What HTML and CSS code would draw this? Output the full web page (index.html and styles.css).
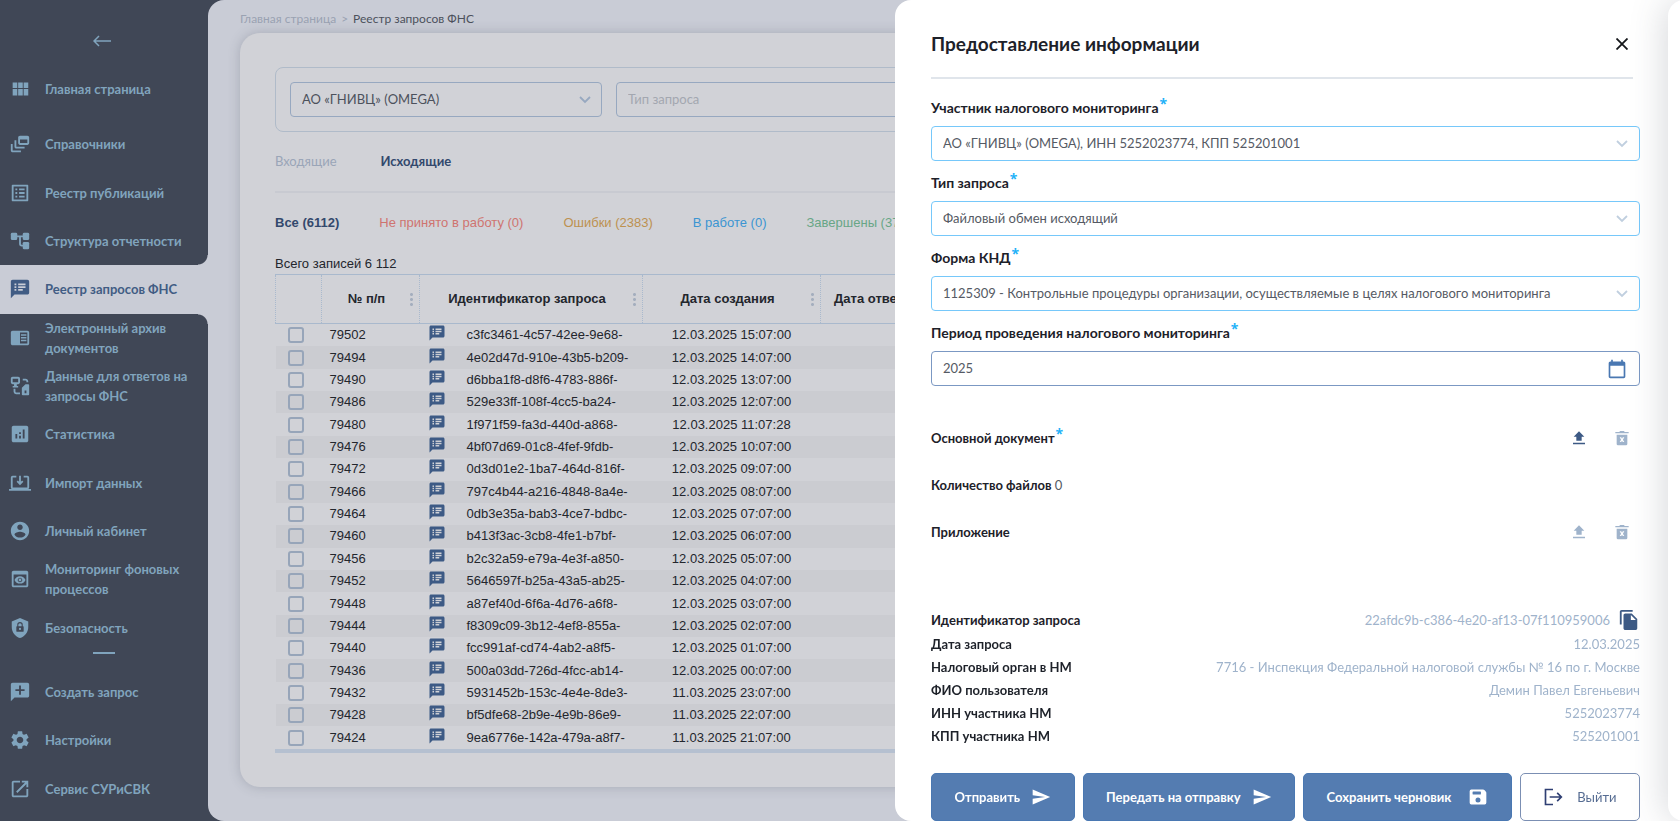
FILE: index.html
```html
<!DOCTYPE html>
<html lang="ru">

<head>
    <meta charset="UTF-8">
    <meta name="viewport" content="width=device-width, initial-scale=1.0">
    <title>Реестр запросов ФНС</title>
    <link rel="stylesheet" href="styles.css">
</head>

<body>
    <!-- Icons -->
    <svg class="sprite" aria-hidden="true">
        <symbol id="i-back" viewBox="0 0 18 12"><path d="M6 1 1 6l5 5M1.5 6H18" fill="none" stroke="currentColor" stroke-width="1.5" /></symbol>
        <symbol id="i-grid" viewBox="0 0 24 24"><path d="M4 11h5V5H4zm0 8h5v-7H4zm6 0h5v-7h-5zm6 0h5v-7h-5zm-6-8h5V5h-5zm6-6v6h5V5z" /></symbol>
        <symbol id="i-feed" viewBox="0 0 24 24"><path d="M8 8H6v7c0 1.1.9 2 2 2h9v-2H8zM20 3h-8c-1.1 0-2 .9-2 2v6c0 1.1.9 2 2 2h8c1.1 0 2-.9 2-2V5c0-1.1-.9-2-2-2zm0 8h-8V7h8zM4 12H2v7c0 1.1.9 2 2 2h9v-2H4z" /></symbol>
        <symbol id="i-list" viewBox="0 0 24 24"><path d="M19 5v14H5V5h14m1.1-2H3.9c-.5 0-.9.4-.9.9v16.2c0 .4.4.9.9.9h16.2c.4 0 .9-.5.9-.9V3.9c0-.5-.5-.9-.9-.9zM11 7h6v2h-6zm0 4h6v2h-6zm0 4h6v2h-6zM7 7h2v2H7zm0 4h2v2H7zm0 4h2v2H7z" /></symbol>
        <symbol id="i-tree" viewBox="0 0 24 24"><rect x="2" y="3" width="7" height="8" rx="1.5" /><rect x="15" y="3" width="7" height="8" rx="1.5" /><rect x="15" y="13" width="7" height="8" rx="1.5" /><path d="M8 7h8M12 7v8q0 2 2 2h2" fill="none" stroke="currentColor" stroke-width="2" /></symbol>
        <symbol id="i-notes" viewBox="0 0 24 24"><path d="M20 2H4c-1.1 0-2 .9-2 2v18l4-4h14c1.1 0 2-.9 2-2V4c0-1.1-.9-2-2-2zM8 14H6v-2h2zm0-3H6V9h2zm0-3H6V6h2zm7 6h-5v-2h5zm3-3h-8V9h8zm0-3h-8V6h8z" /></symbol>
        <symbol id="i-archive" viewBox="0 0 24 24"><path d="M20 4H4c-1.1 0-2 .9-2 2v12c0 1.1.9 2 2 2h16c1.1 0 2-.9 2-2V6c0-1.1-.9-2-2-2zm0 14h-8V6h8zM13 8h6v1.6h-6zm0 3h6v1.6h-6zm0 3h6v1.6h-6z" /></symbol>
        <symbol id="i-data" viewBox="0 0 24 24"><path fill-rule="evenodd" d="M4 2h6c1.1 0 2 .9 2 2v4c0 1.1-.9 2-2 2H8.500v2H10v1.500H4V12h1.500v-2H4c-1.100 0-2-.9-2-2V4c0-1.100.9-2 2-2zm0 2v4h6V4zM15 4h3c1.700 0 3 1.300 3 3v1h-2V7c0-.6-.4-1-1-1h-3zM5 15h2v3c0 .6.4 1 1 1h4v2H8c-1.700 0-3-1.300-3-3zM18 10h3q1 0 1 1v10q0 1-1 1h-6q-1 0-1-1v-7zM17 17v3h2v-3z" /></symbol>
        <symbol id="i-stats" viewBox="0 0 24 24"><path d="M19 3H5c-1.1 0-2 .9-2 2v14c0 1.1.9 2 2 2h14c1.1 0 2-.9 2-2V5c0-1.1-.9-2-2-2zM9 17H7v-5h2zm4 0h-2v-3h2zm0-5h-2v-2h2zm4 5h-2V7h2z" /></symbol>
        <symbol id="i-import" viewBox="0 0 24 24"><path d="M8 5H4q-1 0-1 1v11q0 1 1 1h16q1 0 1-1V6q0-1-1-1h-4M12 4v8M9 10l3 3 3-3M0 19.5h24" fill="none" stroke="currentColor" stroke-width="2" /></symbol>
        <symbol id="i-user" viewBox="0 0 24 24"><path d="M12 2C6.48 2 2 6.48 2 12s4.48 10 10 10 10-4.48 10-10S17.52 2 12 2zm0 3c1.66 0 3 1.34 3 3s-1.34 3-3 3-3-1.34-3-3 1.34-3 3-3zm0 14.2c-2.5 0-4.71-1.28-6-3.22.03-1.99 4-3.08 6-3.08 1.99 0 5.97 1.09 6 3.08-1.29 1.94-3.5 3.22-6 3.22z" /></symbol>
        <symbol id="i-monitor" viewBox="0 0 24 24"><path d="M19 3H5c-1.11 0-2 .9-2 2v14c0 1.1.89 2 2 2h14c1.1 0 2-.9 2-2V5c0-1.1-.9-2-2-2zm0 16H5V7h14zm-5.5-6c0 .83-.67 1.5-1.5 1.5s-1.5-.67-1.5-1.5.67-1.5 1.5-1.5 1.5.67 1.5 1.5zM12 9c-2.73 0-5.06 1.66-6 4 .94 2.34 3.27 4 6 4s5.06-1.66 6-4c-.94-2.34-3.27-4-6-4zm0 6.5c-1.38 0-2.5-1.12-2.5-2.5s1.12-2.5 2.5-2.5 2.5 1.12 2.5 2.5-1.12 2.5-2.5 2.5z" /></symbol>
        <symbol id="i-shield" viewBox="0 0 24 24"><path fill-rule="evenodd" d="M12 1 3 5v6c0 5.550 3.840 10.740 9 12 5.160-1.260 9-6.450 9-12V5zM8.500 10H9V8.500a3 3 0 0 1 6 0V10h.5q.5 0 .5.5v5q0 .5-.5.5h-7q-.5 0-.5-.5v-5q0-.5.5-.5zm1.700 0h3.600V8.500a1.800 1.800 0 0 0-3.600 0zM12 11.800a1.200 1.200 0 1 0 0 2.400 1.200 1.200 0 0 0 0-2.400z" /></symbol>
        <symbol id="i-create" viewBox="0 0 24 24"><path d="M20 2H4c-1.1 0-2 .9-2 2v18l4-4h14c1.1 0 2-.9 2-2V4c0-1.1-.9-2-2-2zm-3 9h-4v4h-2v-4H7V9h4V5h2v4h4z" /></symbol>
        <symbol id="i-settings" viewBox="0 0 24 24"><path d="M19.14 12.94c.04-.3.06-.61.06-.94 0-.32-.02-.64-.07-.94l2.03-1.58c.18-.14.23-.41.12-.61l-1.92-3.32c-.12-.22-.37-.29-.59-.22l-2.39.96c-.5-.38-1.03-.7-1.62-.94l-.36-2.54c-.04-.24-.24-.41-.48-.41h-3.84c-.24 0-.43.17-.47.41l-.36 2.54c-.59.24-1.13.57-1.62.94l-2.39-.96c-.22-.08-.47 0-.59.22L2.74 8.87c-.12.21-.08.47.12.61l2.03 1.58c-.05.3-.09.63-.09.94s.02.64.07.94l-2.03 1.58c-.18.14-.23.41-.12.61l1.92 3.32c.12.22.37.29.59.22l2.39-.96c.5.38 1.03.7 1.62.94l.36 2.54c.05.24.24.41.48.41h3.84c.24 0 .44-.17.47-.41l.36-2.54c.59-.24 1.13-.56 1.62-.94l2.39.96c.22.08.47 0 .59-.22l1.92-3.32c.12-.22.07-.47-.12-.61zM12 15.6c-1.98 0-3.6-1.62-3.6-3.6s1.62-3.6 3.6-3.6 3.6 1.62 3.6 3.6-1.62 3.6-3.6 3.6z" /></symbol>
        <symbol id="i-open" viewBox="0 0 24 24"><path d="M19 19H5V5h7V3H5c-1.11 0-2 .9-2 2v14c0 1.1.89 2 2 2h14c1.1 0 2-.9 2-2v-7h-2zM14 3v2h3.59l-9.83 9.83 1.41 1.41L19 6.41V10h2V3z" /></symbol>
        <symbol id="i-chevron" viewBox="0 0 12 12"><path d="M1 3l5 5 5-5" fill="none" stroke="currentColor" stroke-width="1.8" /></symbol>
        <symbol id="i-close" viewBox="0 0 12 12"><path d="M.5.5l11 11M11.5.5l-11 11" fill="none" stroke="currentColor" stroke-width="1.8" /></symbol>
        <symbol id="i-calendar" viewBox="0 0 24 24"><path d="M20 3h-1V1h-2v2H7V1H5v2H4c-1.1 0-2 .9-2 2v16c0 1.1.9 2 2 2h16c1.1 0 2-.9 2-2V5c0-1.1-.9-2-2-2zm0 18H4V8h16z" /></symbol>
        <symbol id="i-upload" viewBox="0 0 24 24"><path d="M8 16h8v-6h4l-8-8-8 8h4zM3 19h18v2.5H3z" /></symbol>
        <symbol id="i-trash" viewBox="0 0 24 24"><path fill-rule="evenodd" d="M4 7h16v14q0 2-2 2H6q-2 0-2-2zM8.500 11l2.200 3.500-2.200 3.500h2.300l1.200-2 1.200 2h2.300l-2.200-3.500 2.200-3.500h-2.300l-1.200 2-1.200-2zM2 3h6l1-1.500h6L16 3h6v2H2z" /></symbol>
        <symbol id="i-copy" viewBox="0 0 24 24"><path d="M16 1H4c-1.1 0-2 .9-2 2v14h2V3h12zM15 5H8c-1.1 0-2 .9-2 2v14c0 1.1.9 2 2 2h11c1.1 0 2-.9 2-2V11zm-1 7V6.5l5.5 5.5z" /></symbol>
        <symbol id="i-send" viewBox="0 0 24 24"><path d="M2 21 23 12 2 3v7l15 2-15 2z" /></symbol>
        <symbol id="i-save" viewBox="0 0 24 24"><path fill-rule="evenodd" d="M18 3H4q-2 0-2 2v14q0 2 2 2h16q2 0 2-2V7q0-1-1-2l-1-1q-1-1-2-1zM6 5.5h9q.5 0 .5.5v2.500q0 .5-.5.5H6q-.5 0-.5-.5V6q0-.5.5-.5zM12 12.500a3 3 0 1 0 0 6 3 3 0 0 0 0-6z" /></symbol>
        <symbol id="i-exit" viewBox="0 0 24 24"><path d="M12 3H3v18h9M8 12h14M17 7l5 5-5 5" fill="none" stroke="currentColor" stroke-width="2" /></symbol>
    </svg>

    <div class="layout">
        <!-- Sidebar -->
        <aside class="sidebar">
            <button class="back" type="button" aria-label="Свернуть меню"><svg><use href="#i-back" /></svg></button>
            <nav class="menu">
                <a class="menu-item menu-home" href="#"><svg><use href="#i-grid" /></svg>Главная страница</a>
                <a class="menu-item" href="#"><svg><use href="#i-feed" /></svg>Справочники</a>
                <a class="menu-item" href="#"><svg><use href="#i-list" /></svg>Реестр публикаций</a>
                <a class="menu-item" href="#"><svg><use href="#i-tree" /></svg>Структура отчетности</a>
                <a class="menu-item active" href="#"><svg><use href="#i-notes" /></svg>Реестр запросов ФНС</a>
                <a class="menu-item" href="#"><svg><use href="#i-archive" /></svg>Электронный архив документов</a>
                <a class="menu-item" href="#"><svg><use href="#i-data" /></svg>Данные для ответов на запросы ФНС</a>
                <a class="menu-item" href="#"><svg><use href="#i-stats" /></svg>Статистика</a>
                <a class="menu-item" href="#"><svg><use href="#i-import" /></svg>Импорт данных</a>
                <a class="menu-item" href="#"><svg><use href="#i-user" /></svg>Личный кабинет</a>
                <a class="menu-item" href="#"><svg><use href="#i-monitor" /></svg>Мониторинг фоновых процессов</a>
                <a class="menu-item" href="#"><svg><use href="#i-shield" /></svg>Безопасность</a>
                <hr class="menu-line">
                <a class="menu-item" href="#"><svg><use href="#i-create" /></svg>Создать запрос</a>
                <a class="menu-item" href="#"><svg><use href="#i-settings" /></svg>Настройки</a>
                <a class="menu-item" href="#"><svg><use href="#i-open" /></svg>Сервис СУРиСВК</a>
            </nav>
        </aside>

        <!-- Registry -->
        <main class="content">
            <div class="breadcrumbs">
                <a href="#">Главная страница</a>
                <span>&gt;</span>
                <span class="current">Реестр запросов ФНС</span>
            </div>
            <section class="card">
                <div class="filters">
                    <div class="select">
                        <select aria-label="Участник">
                            <option>АО «ГНИВЦ» (OMEGA)</option>
                        </select>
                        <svg><use href="#i-chevron" /></svg>
                    </div>
                    <div class="select empty">
                        <select aria-label="Тип запроса">
                            <option>Тип запроса</option>
                        </select>
                        <svg><use href="#i-chevron" /></svg>
                    </div>
                </div>
                <div class="tabs">
                    <a href="#">Входящие</a>
                    <a class="selected" href="#">Исходящие</a>
                </div>
                <div class="statuses">
                    <a class="all" href="#">Все (6112)</a>
                    <a class="rejected" href="#">Не принято в работу (0)</a>
                    <a class="errors" href="#">Ошибки (2383)</a>
                    <a class="working" href="#">В работе (0)</a>
                    <a class="done" href="#">Завершены (3729)</a>
                </div>
                <p class="total">Всего записей 6 112</p>
                <div class="table-box">
                    <table>
                        <colgroup>
                            <col class="col-check">
                            <col class="col-number">
                            <col class="col-id">
                            <col class="col-date">
                            <col class="col-date">
                            <col>
                        </colgroup>
                        <thead>
                            <tr>
                                <th></th>
                                <th><div class="head"><span>№ п/п</span><i class="dots"></i></div></th>
                                <th><div class="head"><span>Идентификатор запроса</span><i class="dots"></i></div></th>
                                <th><div class="head"><span>Дата создания</span><i class="dots"></i></div></th>
                                <th><div class="head"><span>Дата ответа на запрос</span><i class="dots"></i></div></th>
                                <th></th>
                            </tr>
                        </thead>
                        <tbody id="rows"></tbody>
                    </table>
                </div>
            </section>
        </main>
    </div>

    <!-- Request form -->
    <form class="drawer">
        <header class="drawer-head">
            <h1>Предоставление информации</h1>
            <button class="icon-button close" type="button" aria-label="Закрыть"><svg><use href="#i-close" /></svg></button>
        </header>

        <div class="field">
            <label for="member">Участник налогового мониторинга<sup>*</sup></label>
            <div class="select">
                <select id="member">
                    <option>АО «ГНИВЦ» (OMEGA), ИНН 5252023774, КПП 525201001</option>
                </select>
                <svg><use href="#i-chevron" /></svg>
            </div>
        </div>
        <div class="field">
            <label for="type">Тип запроса<sup>*</sup></label>
            <div class="select">
                <select id="type">
                    <option>Файловый обмен исходящий</option>
                </select>
                <svg><use href="#i-chevron" /></svg>
            </div>
        </div>
        <div class="field">
            <label for="knd">Форма КНД<sup>*</sup></label>
            <div class="select">
                <select id="knd">
                    <option>1125309 - Контрольные процедуры организации, осуществляемые в целях налогового мониторинга</option>
                </select>
                <svg><use href="#i-chevron" /></svg>
            </div>
        </div>
        <div class="field">
            <label for="period">Период проведения налогового мониторинга<sup>*</sup></label>
            <div class="period">
                <input id="period" type="text" value="2025">
                <button class="icon-button calendar" type="button" aria-label="Выбрать период"><svg><use href="#i-calendar" /></svg></button>
            </div>
        </div>

        <div class="files">
            <div class="file-row">
                <b>Основной документ<sup>*</sup></b>
                <button class="icon-button" type="button" aria-label="Загрузить документ"><svg><use href="#i-upload" /></svg></button>
                <button class="icon-button" type="button" aria-label="Удалить документ" disabled><svg><use href="#i-trash" /></svg></button>
            </div>
            <p class="count"><b>Количество файлов</b> 0</p>
            <div class="file-row">
                <b>Приложение</b>
                <button class="icon-button" type="button" aria-label="Загрузить приложение" disabled><svg><use href="#i-upload" /></svg></button>
                <button class="icon-button" type="button" aria-label="Удалить приложение" disabled><svg><use href="#i-trash" /></svg></button>
            </div>
        </div>

        <dl class="info">
            <dt>Идентификатор запроса</dt>
            <dd class="guid">22afdc9b-c386-4e20-af13-07f110959006
                <button class="icon-button copy" type="button" aria-label="Скопировать"><svg><use href="#i-copy" /></svg></button>
            </dd>
            <dt>Дата запроса</dt>
            <dd>12.03.2025</dd>
            <dt>Налоговый орган в НМ</dt>
            <dd>7716 - Инспекция Федеральной налоговой службы № 16 по г. Москве</dd>
            <dt>ФИО пользователя</dt>
            <dd>Демин Павел Евгеньевич</dd>
            <dt>ИНН участника НМ</dt>
            <dd>5252023774</dd>
            <dt>КПП участника НМ</dt>
            <dd>525201001</dd>
        </dl>

        <footer class="actions">
            <button class="button" type="button">Отправить<svg><use href="#i-send" /></svg></button>
            <button class="button" type="button">Передать на отправку<svg><use href="#i-send" /></svg></button>
            <button class="button save" type="button">Сохранить черновик<svg><use href="#i-save" /></svg></button>
            <button class="button exit" type="button"><svg><use href="#i-exit" /></svg>Выйти</button>
        </footer>
        <div class="next-panel"></div>
    </form>

    <script>
        const rows = [
            [79502, "c3fc3461-4c57-42ee-9e68-", "12.03.2025 15:07:00"],
            [79494, "4e02d47d-910e-43b5-b209-", "12.03.2025 14:07:00"],
            [79490, "d6bba1f8-d8f6-4783-886f-", "12.03.2025 13:07:00"],
            [79486, "529e33ff-108f-4cc5-ba24-", "12.03.2025 12:07:00"],
            [79480, "1f971f59-fa3d-440d-a868-", "12.03.2025 11:07:28"],
            [79476, "4bf07d69-01c8-4fef-9fdb-", "12.03.2025 10:07:00"],
            [79472, "0d3d01e2-1ba7-464d-816f-", "12.03.2025 09:07:00"],
            [79466, "797c4b44-a216-4848-8a4e-", "12.03.2025 08:07:00"],
            [79464, "0db3e35a-bab3-4ce7-bdbc-", "12.03.2025 07:07:00"],
            [79460, "b413f3ac-3cb8-4fe1-b7bf-", "12.03.2025 06:07:00"],
            [79456, "b2c32a59-e79a-4e3f-a850-", "12.03.2025 05:07:00"],
            [79452, "5646597f-b25a-43a5-ab25-", "12.03.2025 04:07:00"],
            [79448, "a87ef40d-6f6a-4d76-a6f8-", "12.03.2025 03:07:00"],
            [79444, "f8309c09-3b12-4ef8-855a-", "12.03.2025 02:07:00"],
            [79440, "fcc991af-cd74-4ab2-a8f5-", "12.03.2025 01:07:00"],
            [79436, "500a03dd-726d-4fcc-ab14-", "12.03.2025 00:07:00"],
            [79432, "5931452b-153c-4e4e-8de3-", "11.03.2025 23:07:00"],
            [79428, "bf5dfe68-2b9e-4e9b-86e9-", "11.03.2025 22:07:00"],
            [79424, "9ea6776e-142a-479a-a8f7-", "11.03.2025 21:07:00"]
        ];

        document.getElementById("rows").innerHTML = rows.map(([number, id, date]) => `
            <tr>
                <td class="check"><input type="checkbox" aria-label="Выбрать ${number}"></td>
                <td class="number">${number}</td>
                <td><div class="id"><svg><use href="#i-notes" /></svg>${id}</div></td>
                <td class="date">${date}</td>
                <td></td>
                <td></td>
            </tr>`).join("");
    </script>
</body>

</html>
```
FILE: styles.css
```css
* {
    box-sizing: border-box;
}

body {
    margin: 0;
    overflow: hidden;
    background-color: #404756;
    font-family: Lato, "Open Sans", sans-serif;
    font-size: 13px;
    line-height: 20px;
}

a {
    color: inherit;
    text-decoration: none;
}

button,
input,
select {
    font: inherit;
    color: inherit;
}

svg {
    display: block;
    flex: none;
    fill: currentColor;
}

p,
h1,
dl,
dd {
    margin: 0;
}

.sprite {
    display: none;
}

.layout {
    display: grid;
    grid-template-columns: 208px 1fr;
    height: 100vh;
}

/* Sidebar */
.sidebar {
    display: flex;
    flex-direction: column;
    min-height: 0;
    padding: 31px 0 8px;
    color: #80a4bd;
    font-weight: bold;
}

.back {
    display: flex;
    align-self: center;
    align-items: center;
    height: 20px;
    margin-right: 4px;
    padding: 0;
    border: 0;
    background: none;
}

.back svg {
    width: 18px;
    height: 12px;
}

.menu {
    display: flex;
    flex-direction: column;
    flex: 1;
    padding-top: 14px;
}

.menu-item {
    display: flex;
    flex: 1 0 0;
    align-items: center;
    gap: 14px;
    padding: 0 16px 0 9px;
}

.menu-item svg {
    width: 22px;
    height: 22px;
}

.menu-home {
    margin-bottom: 7px;
}

.active {
    position: relative;
    background-color: #c9ccd6;
    color: #415c84;
}

/* rounded dark corners above and below the active item */
.active::before,
.active::after {
    content: "";
    position: absolute;
    right: 0;
    width: 10px;
    height: 10px;
}

.active::before {
    bottom: 100%;
    background: radial-gradient(circle at 0 0, transparent 9px, #c9ccd6 10px);
}

.active::after {
    top: 100%;
    background: radial-gradient(circle at 0 100%, transparent 9px, #c9ccd6 10px);
}

.menu-line {
    width: 22px;
    height: 2px;
    margin: 0 93px 14px;
    border: 0;
    background-color: #80a4bd;
}

/* Registry */
.content {
    display: flex;
    flex-direction: column;
    min-width: 0;
    min-height: 0;
    padding: 9px 50px 34px 32px;
    border-radius: 16px 0 0 16px;
    background-color: #c9ccd6;
}

.breadcrumbs {
    display: flex;
    gap: 5px;
    margin-bottom: 4px;
    color: #9aa2b2;
    font-size: 12px;
}

.current {
    color: #4c515c;
}

.card {
    display: flex;
    flex-direction: column;
    flex: 1;
    min-height: 0;
    padding: 34px 35px;
    border-radius: 20px;
    background-color: #d1d2d7;
    box-shadow: 0 0 12px rgba(64, 71, 86, 0.25);
}

.filters {
    display: grid;
    grid-template-columns: repeat(4, 1fr);
    gap: 14px;
    padding: 14px;
    border: 1px solid #b0bbc9;
    border-radius: 8px;
}

/* the chevron shares the cell with the select */
.select,
.period {
    display: grid;
    align-items: center;
}

.select > *,
.period > * {
    grid-area: 1 / 1;
}

.select select,
.period input {
    width: 100%;
    height: 35px;
    padding: 0 40px 1px 11px;
    border: 1px solid #97a8c0;
    border-radius: 4px;
    background: none;
    color: #4c515c;
    appearance: none;
}

.select svg {
    justify-self: end;
    width: 12px;
    height: 12px;
    margin-right: 11px;
    color: #97a8c0;
    pointer-events: none;
}

.empty select {
    color: #a3a7b0;
}

.tabs {
    display: flex;
    gap: 44px;
    margin-top: 19px;
    padding-bottom: 20px;
    border-bottom: 2px solid #c8cad1;
    color: #9aa5b7;
}

.selected {
    color: #33496d;
    font-weight: bold;
}

.statuses {
    display: flex;
    gap: 40px;
    margin-top: 20px;
    font-family: "Liberation Sans", Arial, sans-serif;
}

.all {
    color: #33496d;
    font-weight: bold;
}

.rejected {
    color: #cf7470;
}

.errors {
    color: #bd9150;
}

.working {
    color: #3b95d2;
}

.done {
    color: #68a686;
}

.total {
    margin-top: 21px;
    color: #23262d;
    font-family: "Liberation Sans", Arial, sans-serif;
}

.table-box {
    flex: 1;
    min-height: 0;
    border-bottom: 4px solid #b5c0d0;
}

table {
    width: 100%;
    height: 100%;
    table-layout: fixed;
    border-collapse: collapse;
    color: #23262d;
    font-family: "Liberation Sans", Arial, sans-serif;
}

.col-check {
    width: 46px;
}

.col-number {
    width: 98px;
}

.col-id {
    width: 223px;
}

.col-date {
    width: 178px;
}

th {
    height: 49px;
    padding: 0 4px;
    border: 1px solid #a9b9cd;
    border-right-style: dotted;
    border-left-style: dotted;
}

.head {
    display: flex;
    align-items: center;
}

.head span {
    flex: 1;
}

.dots {
    width: 8px;
    height: 15px;
    background: radial-gradient(circle, #a4aebe 1px, transparent 2px) center / 5px 5px repeat-y;
}

td {
    height: 22px;
    padding: 0;
    line-height: 22px;
}

tbody tr:nth-child(even) {
    background-color: #cbccd1;
}

.check input {
    display: block;
    width: 16px;
    height: 16px;
    margin: 0 0 0 12px;
    border: 2px solid #97a5b9;
    border-radius: 3px;
    appearance: none;
}

.number {
    padding-left: 8px;
}

.id {
    display: flex;
    gap: 21px;
    padding-left: 8px;
}

.id svg {
    width: 18px;
    height: 18px;
    color: #3d5a85;
}

.date {
    text-align: center;
}

/* Request form */
.drawer {
    position: fixed;
    top: 0;
    right: 0;
    display: flex;
    flex-direction: column;
    width: min(785px, 100%);
    height: 100vh;
    padding: 29px 40px 0 36px;
    overflow: hidden;
    border-radius: 16px 0 0 16px;
    background-color: #fff;
    color: #1d2129;
}

.drawer-head {
    display: flex;
    align-items: center;
    justify-content: space-between;
    height: 50px;
    margin: 0 7px 19px 0;
    padding-bottom: 19px;
    border-bottom: 2px solid #e0e5eb;
}

h1 {
    font-size: 19px;
    line-height: 29px;
}

.icon-button {
    display: grid;
    place-items: center;
    width: 22px;
    height: 22px;
    padding: 0;
    border: 0;
    background: none;
    color: #3d5a85;
}

.icon-button svg {
    width: 16px;
    height: 16px;
}

.icon-button:disabled {
    color: #9fb3cb;
}

.icon-button.close {
    color: #14161a;
}

.icon-button.close svg {
    width: 12px;
    height: 12px;
}

.field {
    margin-bottom: 12px;
}

.field label {
    display: block;
    margin-bottom: 8px;
    font-size: 14px;
    font-weight: bold;
}

sup {
    padding-left: 1px;
    color: #1fb2f8;
    font-family: "Open Sans", sans-serif;
    font-size: 14px;
    font-weight: bold;
    line-height: 0;
    vertical-align: 4px;
}

.drawer select {
    border-color: #76c8fa;
    color: #555a64;
}

.drawer .select svg {
    margin-right: 12px;
    color: #c0cfdf;
}

.drawer .period input {
    border-color: #7b98c3;
    color: #555a64;
}

.calendar {
    justify-self: end;
    margin-right: 12px;
    color: #4a78b2;
}

.calendar svg {
    width: 20px;
    height: 20px;
}

.files {
    margin-top: 24px;
}

.file-row {
    display: flex;
    align-items: center;
    gap: 21px;
    height: 32px;
    padding-right: 7px;
}

.file-row b {
    flex: 1;
}

.count {
    margin: 21px 0;
    color: #555a64;
}

.count b {
    color: #1d2129;
}

.info {
    display: grid;
    grid-template-columns: auto 1fr;
    grid-template-rows: 25px;
    grid-auto-rows: 23px;
    align-items: center;
    margin-top: 59px;
}

dt {
    font-weight: bold;
}

dd {
    color: #9fb3cb;
    text-align: right;
}

.guid {
    display: flex;
    align-items: center;
    justify-content: flex-end;
    gap: 8px;
}

.copy svg {
    width: 22px;
    height: 22px;
}

.actions {
    display: flex;
    gap: 8px;
    margin-top: auto;
}

.button {
    display: flex;
    flex: auto;
    align-items: center;
    justify-content: center;
    gap: 11px;
    height: 48px;
    padding: 0 20px;
    border: 1px solid #4a78b2;
    border-radius: 5px;
    background-color: #547cb1;
    color: #fff;
    font-weight: bold;
    white-space: nowrap;
}

.button svg {
    width: 20px;
    height: 20px;
}

.save {
    gap: 17px;
}

.exit {
    gap: 14px;
    border-color: #7b8fb3;
    background-color: #fff;
    color: #566c92;
    font-weight: normal;
}

.exit svg {
    color: #2f3f73;
}

/* edge of the neighbouring panel behind the right side of the window */
.next-panel {
    position: absolute;
    top: 0;
    right: -20px;
    bottom: 0;
    width: 32px;
    border-radius: 16px;
    background-color: #fff;
    box-shadow: 0 0 36px rgba(64, 71, 86, 0.25);
    pointer-events: none;
}
```
